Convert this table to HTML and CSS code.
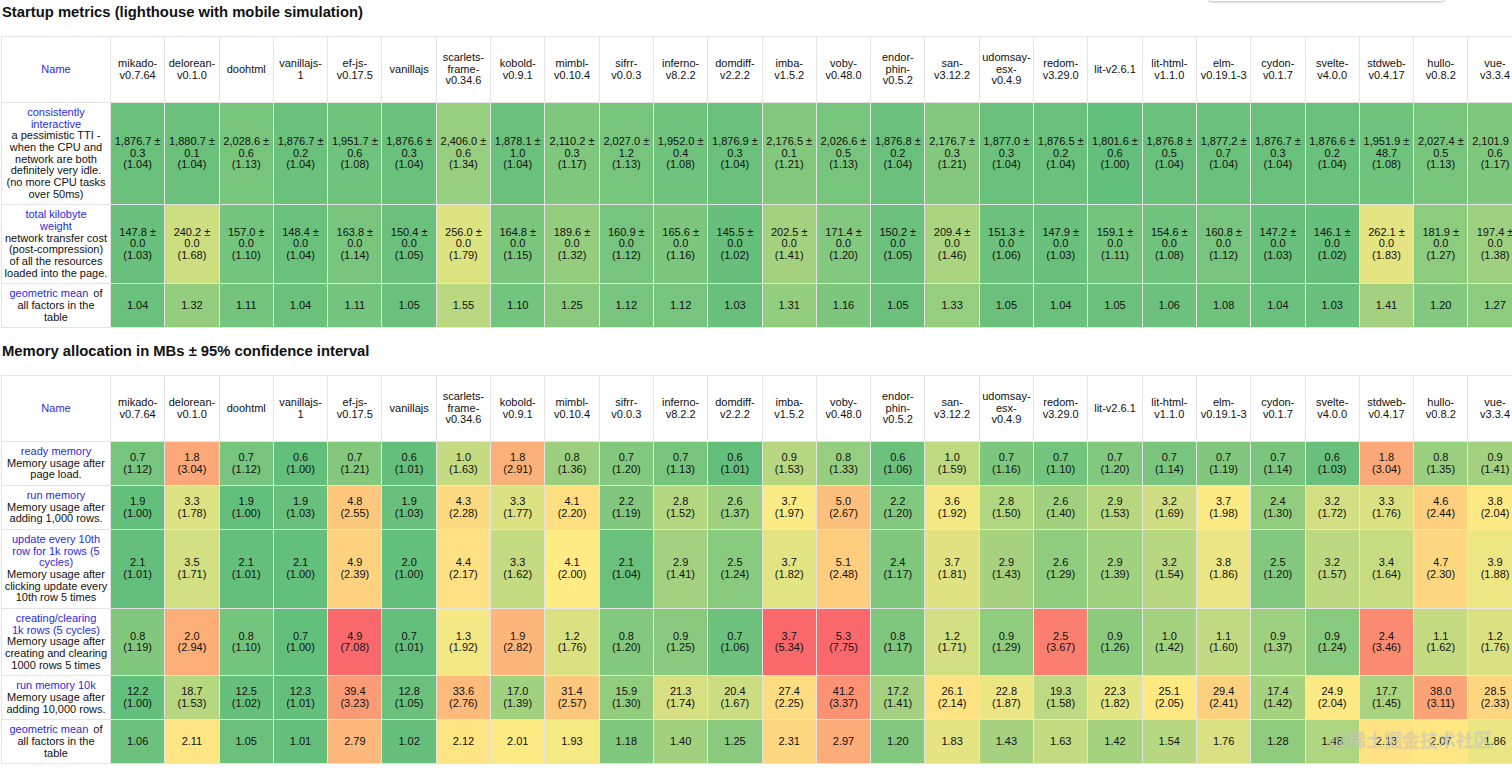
FILE: index.html
```html
<!DOCTYPE html>
<html lang="en">
<head>
<meta charset="utf-8">
<title>js-framework-benchmark results</title>
<link rel="stylesheet" href="styles.css">
</head>
<body>
<div class="top-panel"></div>
<main class="page">
<h3 class="section-title">Startup metrics (lighthouse with mobile simulation)</h3>
<table class="results">
<colgroup><col class="col-name"><col class="col-fw" span="26"></colgroup>
<thead>
<tr>
<th class="label"><a class="lnk">Name</a></th>
<th>mikado-<br>v0.7.64</th><th>delorean-<br>v0.1.0</th><th>doohtml</th><th>vanillajs-<br>1</th><th>ef-js-<br>v0.17.5</th><th>vanillajs</th><th>scarlets-<br>frame-<br>v0.34.6</th><th>kobold-<br>v0.9.1</th><th>mimbl-<br>v0.10.4</th><th>sifrr-<br>v0.0.3</th><th>inferno-<br>v8.2.2</th><th>domdiff-<br>v2.2.2</th><th>imba-<br>v1.5.2</th><th>voby-<br>v0.48.0</th><th>endor-<br>phin-<br>v0.5.2</th><th>san-<br>v3.12.2</th><th>udomsay-<br>esx-<br>v0.4.9</th><th>redom-<br>v3.29.0</th><th>lit-v2.6.1</th><th>lit-html-<br>v1.1.0</th><th>elm-<br>v0.19.1-3</th><th>cydon-<br>v0.1.7</th><th>svelte-<br>v4.0.0</th><th>stdweb-<br>v0.4.17</th><th>hullo-<br>v0.8.2</th><th>vue-<br>v3.3.4</th>
</tr>
</thead>
<tbody>
<tr>
<th class="label"><a class="lnk">consistently<br>interactive</a><br>a pessimistic TTI -<br>when the CPU and<br>network are both<br>definitely very idle.<br>(no more CPU tasks<br>over 50ms)</th>
<td style="background:rgb(105,193,124)">1,876.7 ±<br>0.3<br>(1.04)</td>
<td style="background:rgb(105,193,124)">1,880.7 ±<br>0.1<br>(1.04)</td>
<td style="background:rgb(119,197,125)">2,028.6 ±<br>0.6<br>(1.13)</td>
<td style="background:rgb(105,193,124)">1,876.7 ±<br>0.2<br>(1.04)</td>
<td style="background:rgb(111,195,125)">1,951.7 ±<br>0.6<br>(1.08)</td>
<td style="background:rgb(105,193,124)">1,876.6 ±<br>0.3<br>(1.04)</td>
<td style="background:rgb(152,206,127)">2,406.0 ±<br>0.6<br>(1.34)</td>
<td style="background:rgb(105,193,124)">1,878.1 ±<br>1.0<br>(1.04)</td>
<td style="background:rgb(126,199,125)">2,110.2 ±<br>0.3<br>(1.17)</td>
<td style="background:rgb(119,197,125)">2,027.0 ±<br>1.2<br>(1.13)</td>
<td style="background:rgb(111,195,125)">1,952.0 ±<br>0.4<br>(1.08)</td>
<td style="background:rgb(105,193,124)">1,876.9 ±<br>0.3<br>(1.04)</td>
<td style="background:rgb(132,200,126)">2,176.5 ±<br>0.1<br>(1.21)</td>
<td style="background:rgb(119,197,125)">2,026.6 ±<br>0.5<br>(1.13)</td>
<td style="background:rgb(105,193,124)">1,876.8 ±<br>0.2<br>(1.04)</td>
<td style="background:rgb(132,200,126)">2,176.7 ±<br>0.3<br>(1.21)</td>
<td style="background:rgb(105,193,124)">1,877.0 ±<br>0.3<br>(1.04)</td>
<td style="background:rgb(105,193,124)">1,876.5 ±<br>0.2<br>(1.04)</td>
<td style="background:rgb(99,191,124)">1,801.6 ±<br>0.6<br>(1.00)</td>
<td style="background:rgb(105,193,124)">1,876.8 ±<br>0.5<br>(1.04)</td>
<td style="background:rgb(105,193,124)">1,877.2 ±<br>0.7<br>(1.04)</td>
<td style="background:rgb(105,193,124)">1,876.7 ±<br>0.3<br>(1.04)</td>
<td style="background:rgb(105,193,124)">1,876.6 ±<br>0.2<br>(1.04)</td>
<td style="background:rgb(111,195,125)">1,951.9 ±<br>48.7<br>(1.08)</td>
<td style="background:rgb(119,197,125)">2,027.4 ±<br>0.5<br>(1.13)</td>
<td style="background:rgb(126,199,125)">2,101.9 ±<br>0.6<br>(1.17)</td>
</tr>
<tr>
<th class="label"><a class="lnk">total kilobyte<br>weight</a><br>network transfer cost<br>(post-compression)<br>of all the resources<br>loaded into the page.</th>
<td style="background:rgb(104,192,124)">147.8 ±<br>0.0<br>(1.03)</td>
<td style="background:rgb(205,222,129)">240.2 ±<br>0.0<br>(1.68)</td>
<td style="background:rgb(115,196,125)">157.0 ±<br>0.0<br>(1.10)</td>
<td style="background:rgb(105,193,124)">148.4 ±<br>0.0<br>(1.04)</td>
<td style="background:rgb(121,197,125)">163.8 ±<br>0.0<br>(1.14)</td>
<td style="background:rgb(107,193,124)">150.4 ±<br>0.0<br>(1.05)</td>
<td style="background:rgb(222,227,130)">256.0 ±<br>0.0<br>(1.79)</td>
<td style="background:rgb(122,198,125)">164.8 ±<br>0.0<br>(1.15)</td>
<td style="background:rgb(149,205,127)">189.6 ±<br>0.0<br>(1.32)</td>
<td style="background:rgb(118,196,125)">160.9 ±<br>0.0<br>(1.12)</td>
<td style="background:rgb(124,198,125)">165.6 ±<br>0.0<br>(1.16)</td>
<td style="background:rgb(102,192,124)">145.5 ±<br>0.0<br>(1.02)</td>
<td style="background:rgb(163,209,127)">202.5 ±<br>0.0<br>(1.41)</td>
<td style="background:rgb(130,200,126)">171.4 ±<br>0.0<br>(1.20)</td>
<td style="background:rgb(107,193,124)">150.2 ±<br>0.0<br>(1.05)</td>
<td style="background:rgb(171,212,128)">209.4 ±<br>0.0<br>(1.46)</td>
<td style="background:rgb(108,194,124)">151.3 ±<br>0.0<br>(1.06)</td>
<td style="background:rgb(104,192,124)">147.9 ±<br>0.0<br>(1.03)</td>
<td style="background:rgb(116,196,125)">159.1 ±<br>0.0<br>(1.11)</td>
<td style="background:rgb(111,195,125)">154.6 ±<br>0.0<br>(1.08)</td>
<td style="background:rgb(118,196,125)">160.8 ±<br>0.0<br>(1.12)</td>
<td style="background:rgb(104,192,124)">147.2 ±<br>0.0<br>(1.03)</td>
<td style="background:rgb(102,192,124)">146.1 ±<br>0.0<br>(1.02)</td>
<td style="background:rgb(228,228,131)">262.1 ±<br>0.0<br>(1.83)</td>
<td style="background:rgb(141,203,126)">181.9 ±<br>0.0<br>(1.27)</td>
<td style="background:rgb(158,208,127)">197.4 ±<br>0.0<br>(1.38)</td>
</tr>
<tr>
<th class="label"><a class="lnk gm">geometric mean</a>of<br>all factors in the<br>table</th>
<td style="background:rgb(105,193,124)">1.04</td>
<td style="background:rgb(149,205,127)">1.32</td>
<td style="background:rgb(116,196,125)">1.11</td>
<td style="background:rgb(105,193,124)">1.04</td>
<td style="background:rgb(116,196,125)">1.11</td>
<td style="background:rgb(107,193,124)">1.05</td>
<td style="background:rgb(185,216,128)">1.55</td>
<td style="background:rgb(115,196,125)">1.10</td>
<td style="background:rgb(138,202,126)">1.25</td>
<td style="background:rgb(118,196,125)">1.12</td>
<td style="background:rgb(118,196,125)">1.12</td>
<td style="background:rgb(104,192,124)">1.03</td>
<td style="background:rgb(147,205,126)">1.31</td>
<td style="background:rgb(124,198,125)">1.16</td>
<td style="background:rgb(107,193,124)">1.05</td>
<td style="background:rgb(150,206,127)">1.33</td>
<td style="background:rgb(107,193,124)">1.05</td>
<td style="background:rgb(105,193,124)">1.04</td>
<td style="background:rgb(107,193,124)">1.05</td>
<td style="background:rgb(108,194,124)">1.06</td>
<td style="background:rgb(111,195,125)">1.08</td>
<td style="background:rgb(105,193,124)">1.04</td>
<td style="background:rgb(104,192,124)">1.03</td>
<td style="background:rgb(163,209,127)">1.41</td>
<td style="background:rgb(130,200,126)">1.20</td>
<td style="background:rgb(141,203,126)">1.27</td>
</tr>
</tbody>
</table>

<h3 class="section-title second">Memory allocation in MBs ± 95% confidence interval</h3>
<table class="results">
<colgroup><col class="col-name"><col class="col-fw" span="26"></colgroup>
<thead>
<tr>
<th class="label"><a class="lnk">Name</a></th>
<th>mikado-<br>v0.7.64</th><th>delorean-<br>v0.1.0</th><th>doohtml</th><th>vanillajs-<br>1</th><th>ef-js-<br>v0.17.5</th><th>vanillajs</th><th>scarlets-<br>frame-<br>v0.34.6</th><th>kobold-<br>v0.9.1</th><th>mimbl-<br>v0.10.4</th><th>sifrr-<br>v0.0.3</th><th>inferno-<br>v8.2.2</th><th>domdiff-<br>v2.2.2</th><th>imba-<br>v1.5.2</th><th>voby-<br>v0.48.0</th><th>endor-<br>phin-<br>v0.5.2</th><th>san-<br>v3.12.2</th><th>udomsay-<br>esx-<br>v0.4.9</th><th>redom-<br>v3.29.0</th><th>lit-v2.6.1</th><th>lit-html-<br>v1.1.0</th><th>elm-<br>v0.19.1-3</th><th>cydon-<br>v0.1.7</th><th>svelte-<br>v4.0.0</th><th>stdweb-<br>v0.4.17</th><th>hullo-<br>v0.8.2</th><th>vue-<br>v3.3.4</th>
</tr>
</thead>
<tbody>
<tr>
<th class="label"><a class="lnk">ready memory</a><br>Memory usage after<br>page load.</th>
<td style="background:rgb(118,196,125)">0.7<br>(1.12)</td>
<td style="background:rgb(252,168,120)">1.8<br>(3.04)</td>
<td style="background:rgb(118,196,125)">0.7<br>(1.12)</td>
<td style="background:rgb(99,191,124)">0.6<br>(1.00)</td>
<td style="background:rgb(132,200,126)">0.7<br>(1.21)</td>
<td style="background:rgb(101,191,124)">0.6<br>(1.01)</td>
<td style="background:rgb(197,219,129)">1.0<br>(1.63)</td>
<td style="background:rgb(252,176,121)">1.8<br>(2.91)</td>
<td style="background:rgb(155,207,127)">0.8<br>(1.36)</td>
<td style="background:rgb(130,200,126)">0.7<br>(1.20)</td>
<td style="background:rgb(119,197,125)">0.7<br>(1.13)</td>
<td style="background:rgb(101,191,124)">0.6<br>(1.01)</td>
<td style="background:rgb(182,215,128)">0.9<br>(1.53)</td>
<td style="background:rgb(150,206,127)">0.8<br>(1.33)</td>
<td style="background:rgb(108,194,124)">0.6<br>(1.06)</td>
<td style="background:rgb(191,218,129)">1.0<br>(1.59)</td>
<td style="background:rgb(124,198,125)">0.7<br>(1.16)</td>
<td style="background:rgb(115,196,125)">0.7<br>(1.10)</td>
<td style="background:rgb(130,200,126)">0.7<br>(1.20)</td>
<td style="background:rgb(121,197,125)">0.7<br>(1.14)</td>
<td style="background:rgb(129,200,126)">0.7<br>(1.19)</td>
<td style="background:rgb(121,197,125)">0.7<br>(1.14)</td>
<td style="background:rgb(104,192,124)">0.6<br>(1.03)</td>
<td style="background:rgb(252,168,120)">1.8<br>(3.04)</td>
<td style="background:rgb(154,207,127)">0.8<br>(1.35)</td>
<td style="background:rgb(163,209,127)">0.9<br>(1.41)</td>
</tr>
<tr>
<th class="label"><a class="lnk">run memory</a><br>Memory usage after<br>adding 1,000 rows.</th>
<td style="background:rgb(99,191,124)">1.9<br>(1.00)</td>
<td style="background:rgb(221,226,130)">3.3<br>(1.78)</td>
<td style="background:rgb(99,191,124)">1.9<br>(1.00)</td>
<td style="background:rgb(104,192,124)">1.9<br>(1.03)</td>
<td style="background:rgb(253,200,125)">4.8<br>(2.55)</td>
<td style="background:rgb(104,192,124)">1.9<br>(1.03)</td>
<td style="background:rgb(254,218,129)">4.3<br>(2.28)</td>
<td style="background:rgb(219,226,130)">3.3<br>(1.77)</td>
<td style="background:rgb(254,223,130)">4.1<br>(2.20)</td>
<td style="background:rgb(129,200,126)">2.2<br>(1.19)</td>
<td style="background:rgb(180,214,128)">2.8<br>(1.52)</td>
<td style="background:rgb(157,208,127)">2.6<br>(1.37)</td>
<td style="background:rgb(250,235,132)">3.7<br>(1.97)</td>
<td style="background:rgb(253,192,124)">5.0<br>(2.67)</td>
<td style="background:rgb(130,200,126)">2.2<br>(1.20)</td>
<td style="background:rgb(243,232,131)">3.6<br>(1.92)</td>
<td style="background:rgb(177,214,128)">2.8<br>(1.50)</td>
<td style="background:rgb(161,209,127)">2.6<br>(1.40)</td>
<td style="background:rgb(182,215,128)">2.9<br>(1.53)</td>
<td style="background:rgb(207,222,130)">3.2<br>(1.69)</td>
<td style="background:rgb(252,235,132)">3.7<br>(1.98)</td>
<td style="background:rgb(146,205,126)">2.4<br>(1.30)</td>
<td style="background:rgb(211,223,130)">3.2<br>(1.72)</td>
<td style="background:rgb(218,225,130)">3.3<br>(1.76)</td>
<td style="background:rgb(254,207,127)">4.6<br>(2.44)</td>
<td style="background:rgb(255,233,132)">3.8<br>(2.04)</td>
</tr>
<tr>
<th class="label"><a class="lnk">update every 10th<br>row for 1k rows (5<br>cycles)</a><br>Memory usage after<br>clicking update every<br>10th row 5 times</th>
<td style="background:rgb(101,191,124)">2.1<br>(1.01)</td>
<td style="background:rgb(210,223,130)">3.5<br>(1.71)</td>
<td style="background:rgb(101,191,124)">2.1<br>(1.01)</td>
<td style="background:rgb(99,191,124)">2.1<br>(1.00)</td>
<td style="background:rgb(254,210,127)">4.9<br>(2.39)</td>
<td style="background:rgb(99,191,124)">2.0<br>(1.00)</td>
<td style="background:rgb(254,225,130)">4.4<br>(2.17)</td>
<td style="background:rgb(196,219,129)">3.3<br>(1.62)</td>
<td style="background:rgb(255,236,132)">4.1<br>(2.00)</td>
<td style="background:rgb(105,193,124)">2.1<br>(1.04)</td>
<td style="background:rgb(163,209,127)">2.9<br>(1.41)</td>
<td style="background:rgb(136,202,126)">2.5<br>(1.24)</td>
<td style="background:rgb(227,228,131)">3.7<br>(1.82)</td>
<td style="background:rgb(254,205,126)">5.1<br>(2.48)</td>
<td style="background:rgb(126,199,125)">2.4<br>(1.17)</td>
<td style="background:rgb(225,227,130)">3.7<br>(1.81)</td>
<td style="background:rgb(166,210,127)">2.9<br>(1.43)</td>
<td style="background:rgb(144,204,126)">2.6<br>(1.29)</td>
<td style="background:rgb(160,209,127)">2.9<br>(1.39)</td>
<td style="background:rgb(183,215,128)">3.2<br>(1.54)</td>
<td style="background:rgb(233,230,131)">3.8<br>(1.86)</td>
<td style="background:rgb(130,200,126)">2.5<br>(1.20)</td>
<td style="background:rgb(188,217,129)">3.2<br>(1.57)</td>
<td style="background:rgb(199,220,129)">3.4<br>(1.64)</td>
<td style="background:rgb(254,216,128)">4.7<br>(2.30)</td>
<td style="background:rgb(236,231,131)">3.9<br>(1.88)</td>
</tr>
<tr>
<th class="label"><a class="lnk">creating/clearing<br>1k rows (5 cycles)</a><br>Memory usage after<br>creating and clearing<br>1000 rows 5 times</th>
<td style="background:rgb(129,200,126)">0.8<br>(1.19)</td>
<td style="background:rgb(252,174,121)">2.0<br>(2.94)</td>
<td style="background:rgb(115,196,125)">0.8<br>(1.10)</td>
<td style="background:rgb(99,191,124)">0.7<br>(1.00)</td>
<td style="background:rgb(249,105,108)">4.9<br>(7.08)</td>
<td style="background:rgb(101,191,124)">0.7<br>(1.01)</td>
<td style="background:rgb(243,232,131)">1.3<br>(1.92)</td>
<td style="background:rgb(253,182,122)">1.9<br>(2.82)</td>
<td style="background:rgb(218,225,130)">1.2<br>(1.76)</td>
<td style="background:rgb(130,200,126)">0.8<br>(1.20)</td>
<td style="background:rgb(138,202,126)">0.9<br>(1.25)</td>
<td style="background:rgb(108,194,124)">0.7<br>(1.06)</td>
<td style="background:rgb(249,105,108)">3.7<br>(5.34)</td>
<td style="background:rgb(249,105,108)">5.3<br>(7.75)</td>
<td style="background:rgb(126,199,125)">0.8<br>(1.17)</td>
<td style="background:rgb(210,223,130)">1.2<br>(1.71)</td>
<td style="background:rgb(144,204,126)">0.9<br>(1.29)</td>
<td style="background:rgb(250,127,112)">2.5<br>(3.67)</td>
<td style="background:rgb(140,203,126)">0.9<br>(1.26)</td>
<td style="background:rgb(165,210,127)">1.0<br>(1.42)</td>
<td style="background:rgb(193,218,129)">1.1<br>(1.60)</td>
<td style="background:rgb(157,208,127)">0.9<br>(1.37)</td>
<td style="background:rgb(136,202,126)">0.9<br>(1.24)</td>
<td style="background:rgb(251,140,114)">2.4<br>(3.46)</td>
<td style="background:rgb(196,219,129)">1.1<br>(1.62)</td>
<td style="background:rgb(218,225,130)">1.2<br>(1.76)</td>
</tr>
<tr>
<th class="label"><a class="lnk">run memory 10k</a><br>Memory usage after<br>adding 10,000 rows.</th>
<td style="background:rgb(99,191,124)">12.2<br>(1.00)</td>
<td style="background:rgb(182,215,128)">18.7<br>(1.53)</td>
<td style="background:rgb(102,192,124)">12.5<br>(1.02)</td>
<td style="background:rgb(101,191,124)">12.3<br>(1.01)</td>
<td style="background:rgb(251,155,117)">39.4<br>(3.23)</td>
<td style="background:rgb(107,193,124)">12.8<br>(1.05)</td>
<td style="background:rgb(253,186,123)">33.6<br>(2.76)</td>
<td style="background:rgb(160,209,127)">17.0<br>(1.39)</td>
<td style="background:rgb(253,199,125)">31.4<br>(2.57)</td>
<td style="background:rgb(146,205,126)">15.9<br>(1.30)</td>
<td style="background:rgb(214,224,130)">21.3<br>(1.74)</td>
<td style="background:rgb(204,221,129)">20.4<br>(1.67)</td>
<td style="background:rgb(254,220,129)">27.4<br>(2.25)</td>
<td style="background:rgb(251,146,116)">41.2<br>(3.37)</td>
<td style="background:rgb(163,209,127)">17.2<br>(1.41)</td>
<td style="background:rgb(255,227,130)">26.1<br>(2.14)</td>
<td style="background:rgb(235,230,131)">22.8<br>(1.87)</td>
<td style="background:rgb(189,217,129)">19.3<br>(1.58)</td>
<td style="background:rgb(227,228,131)">22.3<br>(1.82)</td>
<td style="background:rgb(255,233,131)">25.1<br>(2.05)</td>
<td style="background:rgb(254,209,127)">29.4<br>(2.41)</td>
<td style="background:rgb(165,210,127)">17.4<br>(1.42)</td>
<td style="background:rgb(255,233,132)">24.9<br>(2.04)</td>
<td style="background:rgb(169,211,128)">17.7<br>(1.45)</td>
<td style="background:rgb(252,163,119)">38.0<br>(3.11)</td>
<td style="background:rgb(254,214,128)">28.5<br>(2.33)</td>
</tr>
<tr>
<th class="label"><a class="lnk gm">geometric mean</a>of<br>all factors in the<br>table</th>
<td style="background:rgb(108,194,124)">1.06</td>
<td style="background:rgb(255,229,131)">2.11</td>
<td style="background:rgb(107,193,124)">1.05</td>
<td style="background:rgb(101,191,124)">1.01</td>
<td style="background:rgb(253,184,123)">2.79</td>
<td style="background:rgb(102,192,124)">1.02</td>
<td style="background:rgb(255,228,131)">2.12</td>
<td style="background:rgb(255,235,132)">2.01</td>
<td style="background:rgb(244,233,131)">1.93</td>
<td style="background:rgb(127,199,125)">1.18</td>
<td style="background:rgb(161,209,127)">1.40</td>
<td style="background:rgb(138,202,126)">1.25</td>
<td style="background:rgb(254,216,128)">2.31</td>
<td style="background:rgb(252,172,120)">2.97</td>
<td style="background:rgb(130,200,126)">1.20</td>
<td style="background:rgb(228,228,131)">1.83</td>
<td style="background:rgb(166,210,127)">1.43</td>
<td style="background:rgb(197,219,129)">1.63</td>
<td style="background:rgb(165,210,127)">1.42</td>
<td style="background:rgb(183,215,128)">1.54</td>
<td style="background:rgb(218,225,130)">1.76</td>
<td style="background:rgb(143,204,126)">1.28</td>
<td style="background:rgb(174,213,128)">1.48</td>
<td style="background:rgb(255,227,130)">2.13</td>
<td style="background:rgb(255,231,131)">2.07</td>
<td style="background:rgb(233,230,131)">1.86</td>
</tr>
</tbody>
</table>
</main>
<div class="watermark">@稀土掘金技术社区</div>
</body>
</html>
```
FILE: styles.css
```css
html, body {
  margin: 0;
  padding: 0;
  overflow: hidden;
  background: #fff;
}

body {
  font-family: "Liberation Sans", Arial, sans-serif;
  color: #111;
}

.page {
  padding-left: 1px;
}

.section-title {
  margin: 0;
  padding: 2px 0 14px 1px;
  font-size: 14.8px;
  line-height: 20px;
  font-weight: bold;
  color: #111;
}

.section-title.second {
  margin-top: 11px;
}

.results {
  border-collapse: collapse;
  table-layout: fixed;
  width: 1521px;
  font-size: 11px;
  line-height: 11.65px;
}

.col-name {
  width: 109px;
}

.col-fw {
  width: 54.3px;
}

.results th,
.results td {
  border: 1px solid #e4e4e4;
  padding: 4px 1px;
  text-align: center;
  vertical-align: middle;
  white-space: nowrap;
  overflow: hidden;
}

.results thead tr {
  height: 66px;
}

.results th {
  font-weight: normal;
  background: #fff;
  color: #111;
}

.results td {
  color: #111;
}

.lnk {
  color: #2c2cd6;
  text-decoration: none;
}

.lnk.gm {
  margin-right: 5px;
}

.top-panel {
  position: fixed;
  top: -30px;
  left: 1208px;
  width: 237px;
  height: 31px;
  background: #fff;
  border-radius: 0 0 4px 4px;
  box-shadow: 0 1px 3px rgba(0, 0, 0, 0.28);
  z-index: 5;
}

.watermark {
  position: fixed;
  left: 1331px;
  top: 727px;
  font-family: "Noto Sans CJK SC", "Liberation Sans", sans-serif;
  font-size: 18px;
  line-height: 24px;
  color: rgba(255, 255, 255, 0.55);
  text-shadow: 0 0 1px rgba(90, 90, 90, 0.6);
  white-space: nowrap;
  z-index: 5;
}
```
